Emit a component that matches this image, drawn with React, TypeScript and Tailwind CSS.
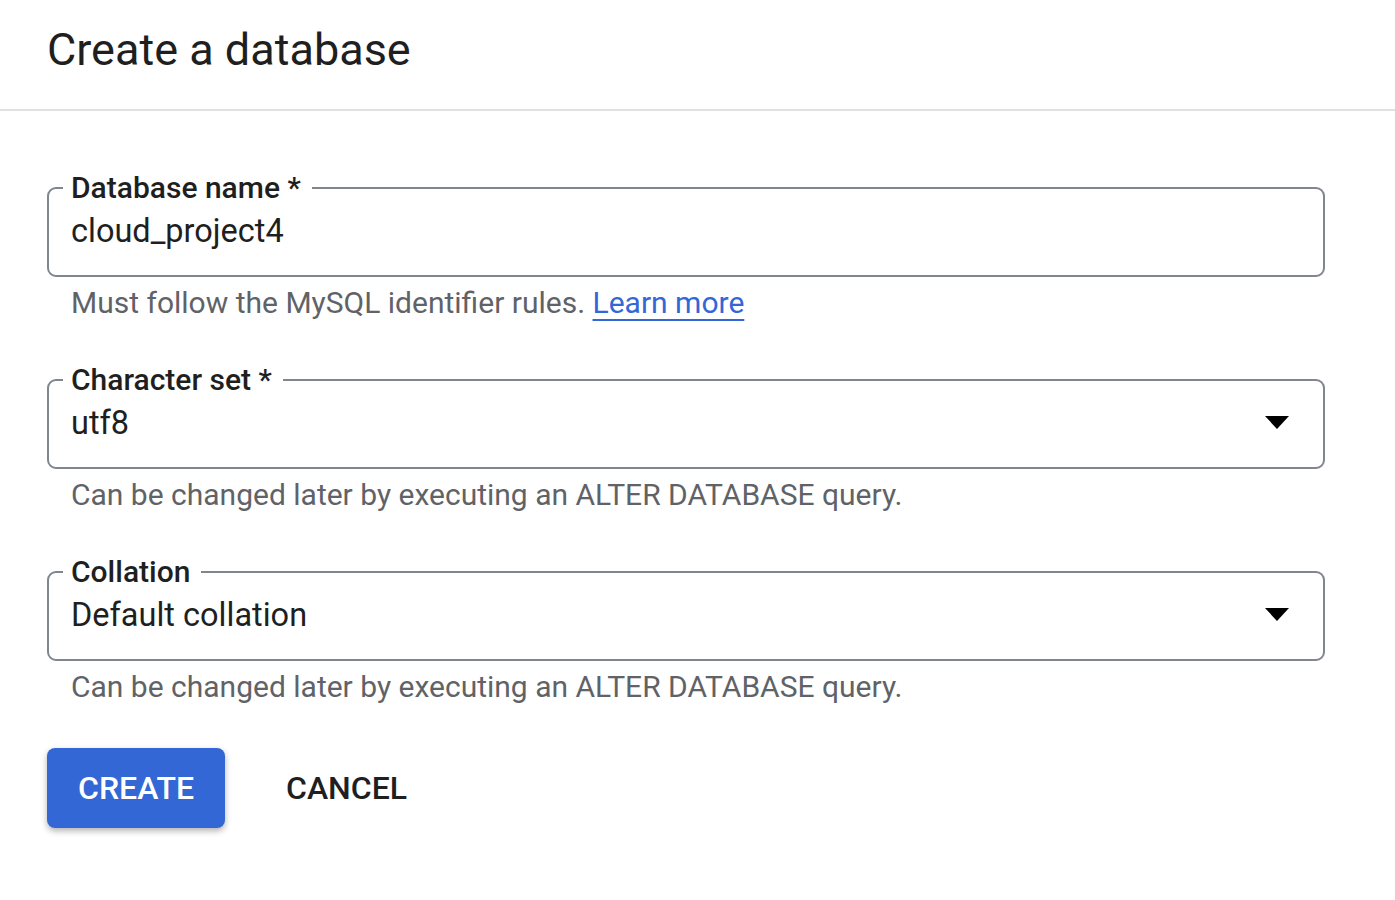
import React from "react";

const font = { fontFamily: "Roboto, 'Noto Sans', Arial, sans-serif" };

function Caret() {
  return (
    <svg width="24" height="14" viewBox="0 0 24 14" className="shrink-0">
      <path d="M0 0 L24 0 L12 13 Z" fill="#000" />
    </svg>
  );
}

function Field({
  label,
  value,
  select,
  helper,
}: {
  label: string;
  value: string;
  select?: boolean;
  helper: React.ReactNode;
}) {
  return (
    <div className="flex flex-col">
      <fieldset className="m-0 rounded-[9px] border-2 border-[#80868b] pl-[14px] pr-[34px] pb-[24px] pt-0">
        <legend className="pl-[8px] pr-[11px] text-[30px] font-medium leading-[26px] text-[#1f1f1f]">
          {label}
        </legend>
        <div className="flex items-center justify-between pl-[8px] pt-[10px]">
          <span className="text-[32.5px] leading-[40px] text-[#1f1f1f]">{value}</span>
          {select ? <Caret /> : null}
        </div>
      </fieldset>
      <div className="pl-[24px] pt-[8px] text-[30px] leading-[36px] text-[#5f6368]">
        {helper}
      </div>
    </div>
  );
}

export default function App() {
  return (
    <div className="min-h-screen bg-white" style={font}>
      <header className="border-b-2 border-[#e0e0e0] px-[47px] pb-[31px] pt-[22px]">
        <h1 className="text-[45px] font-normal leading-[56px] text-[#1f1f1f]">Create a database</h1>
      </header>
      <main className="w-[1372px] px-[47px] pt-[64px]">
        <div className="flex flex-col gap-[46px]">
          <Field
            label="Database name *"
            value="cloud_project4"
            helper={
              <>
                Must follow the MySQL identifier rules.{" "}
                <a href="#" className="text-[#3367d6] underline decoration-2 underline-offset-[6px]">
                  Learn more
                </a>
              </>
            }
          />
          <Field
            label="Character set *"
            value="utf8"
            select
            helper="Can be changed later by executing an ALTER DATABASE query."
          />
          <Field
            label="Collation"
            value="Default collation"
            select
            helper="Can be changed later by executing an ALTER DATABASE query."
          />
        </div>
        <div className="mt-[43px] flex items-center gap-[21px]">
          <button
            type="button"
            className="h-[80px] w-[178px] rounded-[8px] bg-[#3367d6] text-[32px] font-medium text-white shadow-[0_3px_6px_rgba(0,0,0,0.3)]"
          >
            CREATE
          </button>
          <button type="button" className="h-[80px] px-[40px] text-[32px] font-medium text-[#1f1f1f]">
            CANCEL
          </button>
        </div>
      </main>
    </div>
  );
}
